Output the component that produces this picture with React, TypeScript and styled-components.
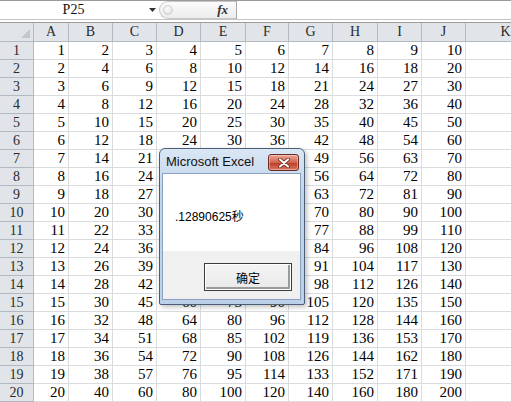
import styled, { createGlobalStyle } from "styled-components";

const GlobalStyle = createGlobalStyle`
	html, body {
		margin: 0;
		padding: 0;
		background: #ffffff;
	}
	* {
		box-sizing: border-box;
	}
`;

const COLS = ["A", "B", "C", "D", "E", "F", "G", "H", "I", "J", "K"];
const WIDTHS = [34, 35, 44, 44, 44, 45, 43, 44, 45, 44, 44, 80];
const GRID = WIDTHS.map(w => `${w}px`).join(" ");
const CELL_FONT = `"Liberation Serif", "DejaVu Serif", serif`;

const StyledSheet = styled.div`
	position: relative;
	width: 511px;
	height: 402px;
	overflow: hidden;
	background: #fff;
`;

const StyledFormulaBar = styled.div`
	display: flex;
	height: 20px;
	border-top: 1px solid #9a9a9a;
	border-bottom: 1px solid #c4c4c4;
`;

const StyledNameBox = styled.div`
	width: 145px;
	display: flex;
	align-items: center;
	justify-content: center;
	font-family: ${CELL_FONT};
	font-size: 14px;
	color: #111;
	padding-left: 2px;
`;

const StyledDrop = styled.div`
	width: 14px;
	display: flex;
	align-items: center;
	justify-content: center;
`;

const StyledPill = styled.div`
	width: 77px;
	display: flex;
	align-items: center;
	justify-content: space-between;
	border-radius: 9px 0 0 9px;
	border: 1px solid #c8c8c8;
	border-right: none;
	background: linear-gradient(#fbfbfb, #ececec);
	padding: 0 4px 0 3px;
`;

const StyledGrip = styled.div`
	width: 10px;
	height: 10px;
	border-radius: 50%;
	background: radial-gradient(circle at 40% 35%, #ffffff, #d8d8d8);
	border: 1px solid #d0d0d0;
`;

const StyledFx = styled.span`
	font-family: "Liberation Serif", serif;
	font-style: italic;
	font-weight: bold;
	font-size: 13px;
	color: #333;
	padding-right: 4px;
`;

const StyledFormulaInput = styled.div`
	flex: 1;
	border-left: 1px solid #a8a8a8;
`;

const StyledSplitter = styled.div`
	height: 3px;
	border-bottom: 1px solid #9c9c9c;
`;

const StyledRow = styled.div<{ $head?: boolean }>`
	display: grid;
	grid-template-columns: ${GRID};
	height: ${p => (p.$head ? 19 : 18)}px;
`;

const StyledHeadCell = styled.div`
	position: relative;
	display: flex;
	align-items: center;
	justify-content: center;
	background: #e1e5ea;
	border-right: 1px solid #b3b9c1;
	border-bottom: 1px solid #b3b9c1;
	font-family: ${CELL_FONT};
	font-size: 14px;
	color: #2a2a2a;
	overflow: hidden;
	white-space: nowrap;
`;

const StyledCornerMark = styled.div`
	position: absolute;
	right: 3px;
	bottom: 3px;
	width: 0;
	height: 0;
	border-left: 9px solid transparent;
	border-bottom: 9px solid #c3c7cc;
`;

const StyledCell = styled.div`
	display: flex;
	align-items: center;
	justify-content: flex-end;
	padding-right: 3px;
	border-right: 1px solid #dadcdd;
	border-bottom: 1px solid #dadcdd;
	font-family: ${CELL_FONT};
	font-size: 15px;
	color: #000;
	overflow: hidden;
	white-space: nowrap;
`;

/* message box lies over the sheet */
const StyledDialog = styled.div`
	position: absolute;
	left: 159px;
	top: 148px;
	width: 146px;
	height: 157px;
	display: flex;
	flex-direction: column;
	border: 1px solid #4a5e78;
	border-radius: 6px 6px 2px 2px;
	background: linear-gradient(#d9e6f5, #c0d4ea 30%, #bcd1e9);
	box-shadow: 2px 2px 5px rgba(0, 0, 0, 0.25);
`;

const StyledTitleBar = styled.div`
	height: 24px;
	display: flex;
	align-items: flex-start;
	justify-content: space-between;
	padding: 4px 5px 0 6px;
`;

const StyledTitle = styled.span`
	font-family: "Liberation Sans", Arial, sans-serif;
	font-size: 13px;
	line-height: 16px;
	color: #111;
	padding-top: 1px;
`;

const StyledClose = styled.div`
	width: 31px;
	height: 17px;
	margin-top: 1px;
	display: flex;
	align-items: center;
	justify-content: center;
	border: 1px solid #6b2b22;
	border-radius: 3px;
	background: linear-gradient(#e9a796, #d2644f 50%, #c0402a 55%, #d7755f);
	box-shadow: inset 0 0 0 1px rgba(255, 255, 255, 0.35);
`;

const StyledPanel = styled.div`
	flex: 1;
	display: flex;
	flex-direction: column;
	margin: 0 3px 4px 2px;
	border: 1px solid #8aa2bf;
`;

const StyledMessage = styled.div`
	height: 77px;
	background: #fff;
	padding: 33px 0 0 12px;
	font-family: "Liberation Sans", Arial, "Noto Sans CJK SC", sans-serif;
	font-size: 12px;
	color: #000;
`;

const StyledFooter = styled.div`
	flex: 1;
	display: flex;
	justify-content: flex-end;
	align-items: flex-start;
	padding: 12px 8px 0 0;
	background: #f0f0f0;
`;

const StyledOk = styled.div`
	width: 88px;
	height: 28px;
	display: flex;
	align-items: center;
	justify-content: center;
	border: 1px solid #3b3b3b;
	background: linear-gradient(#f4f4f4, #e8e8e8);
	box-shadow: inset 0 0 0 1px #ffffff, inset -1px -1px 0 2px #9a9a9a;
	font-family: "Noto Sans CJK SC", sans-serif;
	font-size: 12px;
	color: #000;
`;

function FormulaBar() {
	return (
		<>
			<StyledFormulaBar>
				<StyledNameBox>P25</StyledNameBox>
				<StyledDrop>
					<svg width="7" height="4" viewBox="0 0 7 4">
						<path d="M0 0h7L3.5 4z" fill="#333" />
					</svg>
				</StyledDrop>
				<StyledPill>
					<StyledGrip />
					<StyledFx>fx</StyledFx>
				</StyledPill>
				<StyledFormulaInput />
			</StyledFormulaBar>
			<StyledSplitter />
		</>
	);
}

function Grid() {
	const rows = Array.from({ length: 20 }, (_, i) => i + 1);
	return (
		<>
			<StyledRow $head>
				<StyledHeadCell>
					<StyledCornerMark />
				</StyledHeadCell>
				{COLS.map(c => (
					<StyledHeadCell key={c}>{c}</StyledHeadCell>
				))}
			</StyledRow>
			{rows.map(r => (
				<StyledRow key={r}>
					<StyledHeadCell>{r}</StyledHeadCell>
					{COLS.map((c, ci) => (
						<StyledCell key={c}>{ci < 10 ? r * (ci + 1) : ""}</StyledCell>
					))}
				</StyledRow>
			))}
		</>
	);
}

function MessageBox() {
	return (
		<StyledDialog>
			<StyledTitleBar>
				<StyledTitle>Microsoft Excel</StyledTitle>
				<StyledClose>
					<svg width="12" height="10" viewBox="0 0 12 10">
						<path d="M2 1.5l8 7M10 1.5l-8 7" stroke="#5a1a12" strokeWidth="3.6" strokeLinecap="round" />
						<path d="M2 1.5l8 7M10 1.5l-8 7" stroke="#ffffff" strokeWidth="2.2" strokeLinecap="round" />
					</svg>
				</StyledClose>
			</StyledTitleBar>
			<StyledPanel>
				<StyledMessage>.12890625秒</StyledMessage>
				<StyledFooter>
					<StyledOk>确定</StyledOk>
				</StyledFooter>
			</StyledPanel>
		</StyledDialog>
	);
}

export default function App() {
	return (
		<>
			<GlobalStyle />
			<StyledSheet>
				<FormulaBar />
				<Grid />
				<MessageBox />
			</StyledSheet>
		</>
	);
}
